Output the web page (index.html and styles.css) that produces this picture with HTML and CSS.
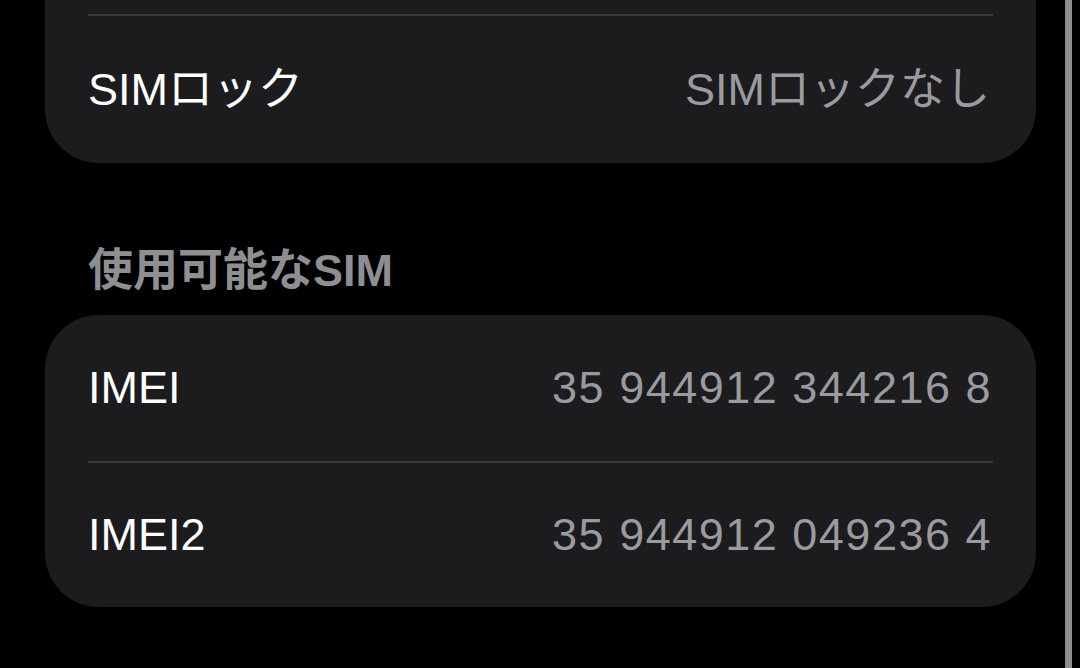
FILE: index.html
```html
<!DOCTYPE html>
<html lang="ja">
<head>
<meta charset="utf-8">
<title>SIM</title>
<link rel="stylesheet" href="styles.css">
</head>
<body>
<div class="screen">
  <main class="column">
    <section class="card card-cut">
      <div class="row row-sep row-tall">
        <span class="label">SIMロック</span>
        <span class="value">SIMロックなし</span>
      </div>
    </section>

    <h2 class="section-title">使用可能なSIM</h2>

    <section class="card">
      <div class="row">
        <span class="label">IMEI</span>
        <span class="value num">35 944912 344216 8</span>
      </div>
      <div class="row row-sep">
        <span class="label">IMEI2</span>
        <span class="value num">35 944912 049236 4</span>
      </div>
    </section>
  </main>
  <div class="edge"></div>
</div>
</body>
</html>
```

FILE: styles.css
```css
html, body {
  margin: 0;
  padding: 0;
  background: #000;
}

body {
  width: 1080px;
  height: 668px;
  overflow: hidden;
  font-family: "Liberation Sans", "Noto Sans CJK JP", sans-serif;
  font-size: 45px;
  line-height: 54px;
  color: #fff;
}

.screen {
  display: flex;
  height: 668px;
}

.column {
  flex: none;
  width: 991px;
  padding-left: 45px;
}

.edge {
  flex: none;
  width: 7px;
  margin-left: 29px;
  background: #8e8e91;
}

.card {
  background: #1c1c1e;
  border-radius: 54px;
}

.card-cut {
  border-radius: 0 0 54px 54px;
  padding-top: 14px;
}

.row {
  box-sizing: border-box;
  display: flex;
  justify-content: space-between;
  align-items: center;
  height: 146px;
  margin: 0 43px;
}

.row-tall {
  height: 149px;
}

.row-sep {
  border-top: 2px solid #3a3a3c;
}

.label {
  color: #fff;
}

.value {
  color: #9a9aa0;
  padding-right: 3px;
}

.num {
  letter-spacing: 1.5px;
  padding-right: 1px;
}

.section-title {
  margin: 81px 0 17px 0;
  padding-left: 43px;
  font-size: 45px;
  line-height: 54px;
  font-weight: 700;
  color: #8e8e93;
}
```
